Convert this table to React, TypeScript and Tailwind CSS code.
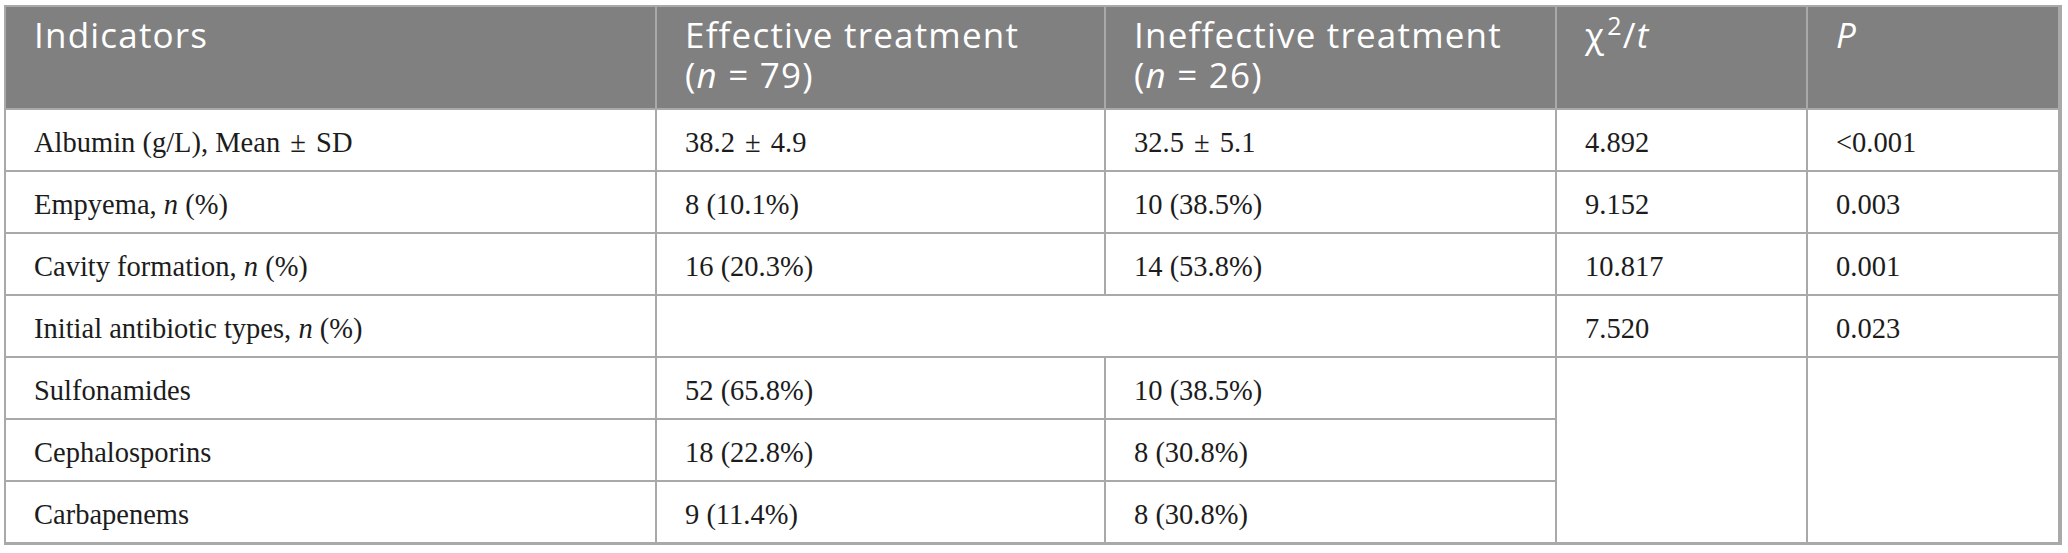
import React from "react";

type Cell = {
  content?: React.ReactNode;
  span?: string;
};

const head =
  "bg-[#808080] text-white px-[28px] pt-[8px] leading-[40px] text-[35px] tracking-[1.2px] font-['Open_Sans',sans-serif]";
const body =
  "bg-white text-[#1c1c1c] px-[28px] pt-[6px] flex items-center leading-[1.2] text-[28.5px] font-['Liberation_Serif','Times_New_Roman',serif]";

const N = () => <i>n</i>;
const Pm = () => <span className="px-[3px]">±</span>;

const rows: Cell[][] = [
  [
    { content: <>Albumin (g/L), Mean <Pm /> SD</> },
    { content: <>38.2 <Pm /> 4.9</> },
    { content: <>32.5 <Pm /> 5.1</> },
    { content: "4.892" },
    { content: "<0.001" },
  ],
  [
    { content: <>Empyema, <N /> (%)</> },
    { content: "8 (10.1%)" },
    { content: "10 (38.5%)" },
    { content: "9.152" },
    { content: "0.003" },
  ],
  [
    { content: <>Cavity formation, <N /> (%)</> },
    { content: "16 (20.3%)" },
    { content: "14 (53.8%)" },
    { content: "10.817" },
    { content: "0.001" },
  ],
  [
    { content: <>Initial antibiotic types, <N /> (%)</> },
    { content: "", span: "col-span-2" },
    { content: "7.520" },
    { content: "0.023" },
  ],
  [
    { content: "Sulfonamides" },
    { content: "52 (65.8%)" },
    { content: "10 (38.5%)" },
    { content: "", span: "row-span-3" },
    { content: "", span: "row-span-3" },
  ],
  [
    { content: "Cephalosporins" },
    { content: "18 (22.8%)" },
    { content: "8 (30.8%)" },
  ],
  [
    { content: "Carbapenems" },
    { content: "9 (11.4%)" },
    { content: "8 (30.8%)" },
  ],
];

export default function App() {
  return (
    <div className="w-[2068px] h-[553px] bg-white pt-[5px] pl-[4px]">
      <div className="w-[2058px] border-[2px] border-r-[3px] border-b-[3px] border-[#a9a9a9] bg-[#a9a9a9]">
        <div className="grid grid-cols-[649px_447px_449px_249px_250px] grid-rows-[101px_repeat(7,60px)] gap-[2px]">
          <div className={head}>Indicators</div>
          <div className={head}>
            Effective treatment
            <br />(<i>n</i> = 79)
          </div>
          <div className={head}>
            Ineffective treatment
            <br />(<i>n</i> = 26)
          </div>
          <div className={head}>
            χ<sup className="text-[25px] relative -top-[13px] ml-[2px]">2</sup>/<i>t</i>
          </div>
          <div className={head}>
            <i>P</i>
          </div>

          {rows.map((r, i) =>
            r.map((c, j) => (
              <div key={`${i}-${j}`} className={`${body} ${c.span ?? ""}`}>
                <span>{c.content}</span>
              </div>
            ))
          )}
        </div>
      </div>
    </div>
  );
}
